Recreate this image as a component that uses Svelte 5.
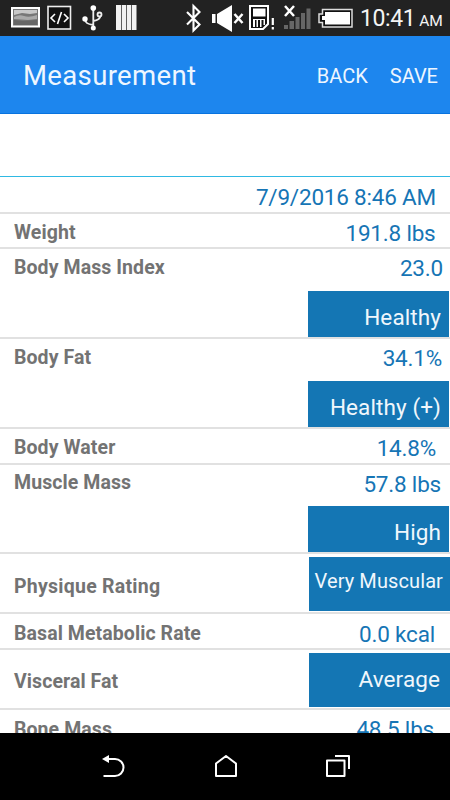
<script>
  const rows = [
    { value: '7/9/2016 8:46 AM', height: 37, valueTop: 6, inset: 14 },
    { label: 'Weight', value: '191.8 lbs', height: 35, labelTop: 7, valueTop: 5, inset: 14.5 },
    { label: 'Body Mass Index', value: '23.0', height: 90, labelTop: 7, valueTop: 5, inset: 7, badge: 'Healthy' },
    { label: 'Body Fat', value: '34.1%', height: 90, labelTop: 7, valueTop: 5, inset: 8, badge: 'Healthy (+)' },
    { label: 'Body Water', value: '14.8%', height: 36, labelTop: 7, valueTop: 5, inset: 14 },
    { label: 'Muscle Mass', value: '57.8 lbs', height: 89, labelTop: 6, valueTop: 5, inset: 9, badge: 'High' },
    { label: 'Physique Rating', height: 60, labelTop: 21, spacing: 0.25, badge: 'Very Muscular', wide: true, small: true },
    { label: 'Basal Metabolic Rate', value: '0.0 kcal', height: 36, labelTop: 8, valueTop: 6, inset: 15 },
    { label: 'Visceral Fat', height: 60, labelTop: 20, badge: 'Average', wide: true },
    { label: 'Bone Mass', value: '48.5 lbs', height: 36, labelTop: 8, valueTop: 5, inset: 16 }
  ];
</script>

<div class="screen">
  <div class="status">
    <svg width="352" height="36" viewBox="0 0 352 36">
      <rect x="12" y="8" width="27" height="18.500" fill="#777" stroke="#fff" stroke-width="2" />
      <path d="M14 10h23v3l-7 1-8-1-8 2z" fill="#c8c8c8" />
      <path d="M14 17q5-3 10-1t13-1v4l-9 1-14-1z" fill="#aaa" />
      <path d="M14 20l9 1 14-1v5H14z" fill="#666" />
      <rect x="48" y="6.5" width="22.5" height="22.5" fill="#111" stroke="#eee" stroke-width="1.6" />
      <path d="M55 14l-4 4 4 4M64 14l4 4-4 4M61.500 12l-4 12" fill="none" stroke="#fff" stroke-width="1.6" />
      <g fill="none" stroke="#eee" stroke-width="1.8">
        <path d="M93.300 8v20M93.300 25c-6-1-8-2-8-6M93.300 21c5-1 7-2 7-5" />
        <circle cx="99.500" cy="14.500" r="2" />
      </g>
      <g fill="#fff"><circle cx="93.300" cy="8" r="2.800" /><circle cx="85" cy="19" r="2.700" /><circle cx="93.300" cy="28" r="2.500" /></g>
      <path d="M116 5h5v25h-5zM121.700 5h4.600v25h-4.600zM127 5h4.300v25H127zM132 5h4.500v25H132z" fill="#f2f2f2" />
      <path d="M187 12l12.500 12.500-6 6V6l6 6L187 24.500" fill="none" stroke="#fff" stroke-width="2.100" />
      <path d="M212 14h3.500v9H212zM217 14l15-9v27l-15-9z" fill="#fff" />
      <path d="M234.500 14l8 9M242.500 14l-8 9" stroke="#fff" stroke-width="2.500" />
      <path d="M250 6h18v18l-5 5h-13z" fill="#111" stroke="#fff" stroke-width="2" />
      <path d="M253 8.500h12.500v8H253zM253 20h2v7h-2zM256.500 20h1.500v7h-1.500zM260 20h1.500v7H260zM263.500 20h1.500v5h-1.500z" fill="#fff" />
      <path d="M253 19.500h12" stroke="#fff" />
      <path d="M272.800 18v7M272.800 27v2.500" stroke="#fff" stroke-width="2.200" />
      <path d="M285 6l9 10M294 6l-9 10" stroke="#fff" stroke-width="2.500" />
      <path d="M284 25h4v4h-4zM289.500 21h4.500v8h-4.500zM295.500 17h4v12h-4zM301 13h4v16h-4zM306.500 8.500h4V29h-4z" fill="#666" />
      <path d="M322.500 9.500H352V27h-29.500v-4.500H319V14h3.500z" fill="#111" stroke="#ddd" stroke-width="1.500" />
      <path d="M325 12h25v12.500h-25V20h-3v-4h3z" fill="#fff" />
    </svg>
    <span class="clock">10:41</span><span class="ampm">AM</span>
  </div>

  <header>
    <h1>Measurement</h1>
    <button class="back">BACK</button>
    <button class="save">SAVE</button>
  </header>

  <div class="blank"></div>

  <main>
    {#each rows as r}
      <section class="row" style="height: {r.height}px">
        <span class="label" style="padding-top: {r.labelTop ?? 0}px; letter-spacing: {r.spacing ?? 0.08}px">{r.label ?? ''}</span>
        <div class="side" class:wide={r.wide}>
          {#if r.value}
            <span class="value" style="padding: {r.valueTop}px {r.inset}px 0 0">{r.value}</span>
          {/if}
          {#if r.badge}
            <span class="badge" class:small={r.small}>{r.badge}</span>
          {/if}
        </div>
      </section>
    {/each}
  </main>

  <nav>
    <svg width="24" height="24" viewBox="0 0 24 24"><path d="M1.500 21H13a8.500 8.500 0 0 0 0-17H5" fill="none" stroke="#fff" stroke-width="2" /><path d="M0 4l7-4v8z" fill="#fff" /></svg>
    <svg width="24" height="24" viewBox="0 0 24 24"><path d="M2 8.500L12 1l10 7.500V21H2z" fill="none" stroke="#fff" stroke-width="2" stroke-linejoin="round" /></svg>
    <svg width="24" height="24" viewBox="0 0 24 24"><path d="M1 5.500h17.500V21H1zM9 1h14v13" fill="none" stroke="#fff" stroke-width="2" stroke-linejoin="round" /></svg>
  </nav>
</div>

<style>
  .screen {
    width: 450px;
    height: 800px;
    display: flex;
    flex-direction: column;
    overflow: hidden;
    background: #fff;
    font-family: Roboto, "Liberation Sans", sans-serif;
  }
  .status {
    flex: none;
    height: 36px;
    display: flex;
    background: #222;
    color: #f4f4f4;
    line-height: 38px;
    white-space: nowrap;
  }
  .status svg { flex: none; overflow: visible; }
  .clock { margin-left: 8px; font-size: 23px; letter-spacing: -0.4px; }
  .ampm { margin-left: 4px; font-size: 15.5px; line-height: 42px; letter-spacing: -0.2px; }
  header {
    flex: none;
    height: 78px;
    display: flex;
    align-items: center;
    box-sizing: border-box;
    padding: 2px 12px 0 23px;
    background: #1d86ee;
    border-bottom: 1px solid #0873df;
    color: #eef6ff;
  }
  h1 { flex: 1; margin: 0; font-size: 27.5px; font-weight: 400; letter-spacing: 0.35px; }
  button {
    padding: 0;
    border: 0;
    background: none;
    color: inherit;
    font: 20px Roboto, sans-serif;
  }
  .save { margin-left: 22px; }
  .blank { flex: none; height: 62px; border-bottom: 1px solid #2fb9e3; }
  main { flex: none; height: 556px; overflow: hidden; }
  .row {
    display: flex;
    justify-content: space-between;
    box-sizing: border-box;
    border-bottom: 2px solid #e1e1e1;
    white-space: nowrap;
  }
  .label {
    padding-left: 14px;
    color: #737373;
    font-size: 19.5px;
    font-weight: 700;
    line-height: 24px;
  }
  .side { display: flex; flex-direction: column; align-items: flex-end; justify-content: space-between; }
  .value { color: #1675b5; font-size: 22.5px; line-height: 28px; letter-spacing: -0.2px; }
  .badge {
    width: 141px;
    height: 46px;
    margin-right: 1px;
    padding-right: 8px;
    box-sizing: border-box;
    background: #1476b4;
    color: #f0f7fc;
    font-size: 22.5px;
    line-height: 52px;
    letter-spacing: 0.1px;
    text-align: right;
  }
  .wide .badge { height: 54px; margin: 3px 0 0; padding-right: 10px; }
  .wide .small { padding-right: 7px; font-size: 20px; line-height: 48px; }
  nav {
    flex: none;
    height: 67px;
    display: flex;
    justify-content: space-between;
    box-sizing: border-box;
    padding: 22px 100px 0 102px;
    background: #000;
  }
</style>
